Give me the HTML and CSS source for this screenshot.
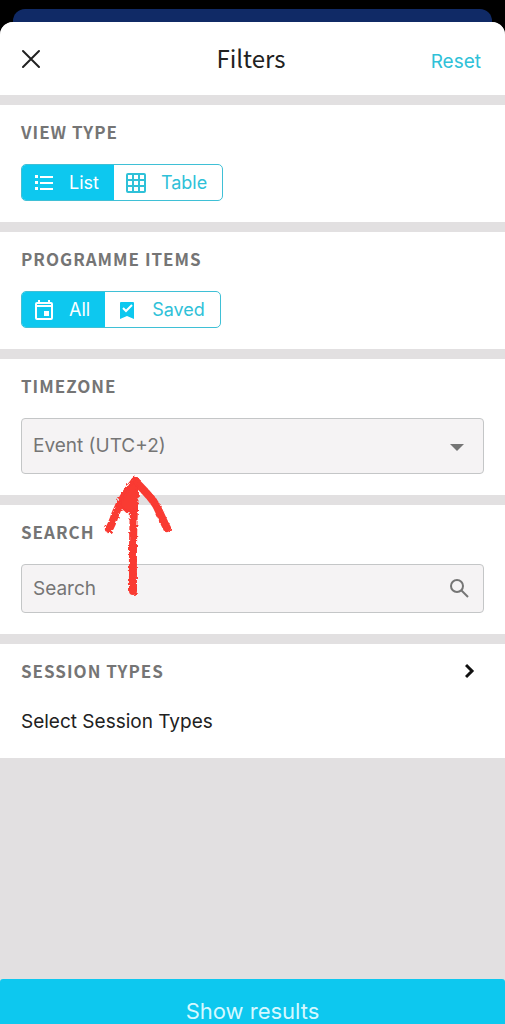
FILE: index.html
```html
<!DOCTYPE html>
<html lang="en">

<head>
    <meta charset="utf-8" />
    <meta name="viewport" content="width=device-width, initial-scale=1" />
    <title>Filters</title>
    <link rel="stylesheet" href="styles.css">
</head>

<body>
    <div class="behind"></div>

    <form class="sheet">
        <header class="header">
            <button class="close" type="button" aria-label="Close">
                <svg width="20" height="20" viewBox="0 0 20 20"><path d="M2 2l16 16M18 2L2 18" /></svg>
            </button>
            <h1>Filters</h1>
            <button class="reset" type="reset">Reset</button>
        </header>

        <fieldset class="section">
            <legend class="title">VIEW TYPE</legend>
            <div class="segments">
                <label class="segment">
                    <input type="radio" name="view" checked />
                    <svg width="20" height="20" viewBox="0 0 20 20">
                        <path d="M1 2h3v3H1zM1 8h3v3H1zM1 14h3v3H1zM6 3h13v2H6zM6 9h13v2H6zM6 15h13v2H6z" />
                    </svg>
                    <span>List</span>
                </label>
                <label class="segment">
                    <input type="radio" name="view" />
                    <svg width="20" height="20" viewBox="0 0 20 20">
                        <path fill-rule="evenodd" d="M2 0h16a2 2 0 0 1 2 2v16a2 2 0 0 1-2 2H2a2 2 0 0 1-2-2V2a2 2 0 0 1 2-2zM2 2v4h4V2zM8 2v4h4V2zM14 2v4h4V2zM2 8v4h4V8zM8 8v4h4V8zM14 8v4h4V8zM2 14v4h4v-4zM8 14v4h4v-4zM14 14v4h4v-4z" />
                    </svg>
                    <span>Table</span>
                </label>
            </div>
        </fieldset>

        <fieldset class="section">
            <legend class="title">PROGRAMME ITEMS</legend>
            <div class="segments">
                <label class="segment">
                    <input type="radio" name="items" checked />
                    <svg width="20" height="20" viewBox="0 0 20 20">
                        <path fill-rule="evenodd" d="M4 0h2v2h8V0h2v2h1a2 2 0 0 1 2 2v14a2 2 0 0 1-2 2H3a2 2 0 0 1-2-2V4a2 2 0 0 1 2-2h1zM3 4v1h14V4zM3 7v11h14V7zM10 11h5v5h-5z" />
                    </svg>
                    <span>All</span>
                </label>
                <label class="segment saved">
                    <input type="radio" name="items" />
                    <svg width="14" height="20" viewBox="0 0 14 20">
                        <path d="M1 2h12a1 1 0 0 1 1 1v16l-7-3-7 3V3a1 1 0 0 1 1-1z" />
                        <path class="tick" d="M3 8l3 3 6-6" />
                    </svg>
                    <span>Saved</span>
                </label>
            </div>
        </fieldset>

        <section class="section">
            <label class="title" for="timezone">TIMEZONE</label>
            <div class="field">
                <select class="timezone" id="timezone">
                    <option>Event (UTC+2)</option>
                </select>
                <svg width="20" height="20" viewBox="0 0 20 20"><path d="M1 8h14l-7 7z" /></svg>
            </div>
            <svg class="arrow" width="70" height="124" viewBox="0 0 70 124" aria-hidden="true">
                <filter id="crayon" x="-10%" y="-10%" width="120%" height="120%">
                    <feTurbulence type="fractalNoise" baseFrequency="0.4" numOctaves="2" seed="4" />
                    <feDisplacementMap in="SourceGraphic" scale="4" />
                </filter>
                <g filter="url(#crayon)">
                    <path d="M33 6C29 44 30 80 30 116" />
                    <path d="M32 6C22 18 15 32 12 40C10 46 8 51 6 54" />
                    <path d="M32 6C42 16 50 24 54 32C58 40 60 46 64 53" />
                    <path class="blob" d="M32 4L16 30L24 37L34 34L34 16z" />
                </g>
            </svg>
        </section>

        <section class="section">
            <label class="title" for="search">SEARCH</label>
            <div class="field">
                <input class="search" id="search" type="text" placeholder="Search" />
                <svg width="20" height="20" viewBox="0 0 20 20">
                    <circle cx="8" cy="7" r="6" />
                    <path class="handle" d="M12 11l7 7" />
                </svg>
            </div>
        </section>

        <section class="section">
            <a class="title more" href="#session-types">
                SESSION TYPES
                <svg width="10" height="16" viewBox="0 0 10 16"><path d="M1 2l6 6-6 6" /></svg>
            </a>
            <p class="types" id="session-types">Select Session Types</p>
        </section>

        <button class="show" type="submit">Show results</button>
    </form>
</body>

</html>
```

FILE: styles.css
```css
* {
    box-sizing: border-box;
}

body {
    display: flex;
    flex-direction: column;
    min-height: 100vh;
    margin: 0;
    padding-top: 9px;
    background: #000;
    color: #212121;
    font: 18px/24px Inter, sans-serif;
}

button, input, select {
    margin: 0;
    border: 0;
    font: inherit;
}

svg {
    flex: none;
    fill: currentColor;
}

.behind {
    height: 13px;
    margin: 0 13px;
    background: #102a66;
    border-radius: 12px 12px 0 0;
}

.sheet {
    display: flex;
    flex: 1;
    flex-direction: column;
    gap: 10px;
    overflow: hidden;
    background: #e2e0e1;
    border-radius: 13px 13px 0 0;
}

.header {
    display: grid;
    grid-template-columns: 1fr auto 1fr;
    align-items: center;
    height: 73px;
    padding: 0 24px 0 21px;
    background: #fff;
}

.header h1 {
    margin: 0;
    padding-bottom: 2px;
    font: 400 24px/32px "Noto Sans CJK SC", sans-serif;
}

.close {
    display: flex;
    justify-self: start;
    padding: 0;
    background: none;
    color: #212121;
}

.close path {
    stroke: currentColor;
    stroke-width: 2;
    stroke-linecap: round;
}

.reset {
    justify-self: end;
    padding: 6px 0 0;
    background: none;
    color: #2fc1d8;
    font-size: 19px;
}

.section {
    position: relative;
    min-width: 0;
    margin: 0;
    padding: 16px 21px 21px;
    border: 0;
    background: #fff;
}

.title {
    display: block;
    float: left;
    width: 100%;
    margin-bottom: 21px;
    padding: 0;
    color: #757575;
    font: bold 17px/22px "Noto Sans CJK SC", sans-serif;
    letter-spacing: 1px;
}

.segments, .field, .types {
    clear: both;
}

.segments {
    display: flex;
    width: fit-content;
    height: 37px;
    overflow: hidden;
    border: 1px solid #3fc0d6;
    border-radius: 5px;
}

.segment {
    display: flex;
    align-items: center;
    gap: 15px;
    padding: 0 15px 0 12px;
    color: #2fc1d8;
}

.segment input {
    position: absolute;
    opacity: 0;
}

.segment:has(:checked) {
    background: #0dc8ef;
    color: #fff;
}

.saved {
    gap: 18px;
    padding-left: 15px;
}

.saved svg {
    color: #0dc8ef;
}

.tick {
    fill: none;
    stroke: #fff;
    stroke-width: 2;
}

.field {
    display: grid;
    align-items: center;
}

.field > * {
    grid-area: 1 / 1;
}

.field select, .field input {
    width: 100%;
    padding: 0 11px;
    border: 1px solid #c4c6c7;
    border-radius: 4px;
    background: #f5f3f4;
    color: #757575;
    font-size: 19px;
    appearance: none;
}

.field svg {
    justify-self: end;
    margin-right: 15px;
    color: #757575;
    pointer-events: none;
}

.field .timezone {
    height: 56px;
}

.field .search {
    height: 49px;
}

.search::placeholder {
    color: #757575;
}

.search + svg circle, .handle {
    fill: none;
    stroke: currentColor;
    stroke-width: 2;
}

/* hand-drawn pointer to the timezone field */
.arrow {
    position: absolute;
    z-index: 1;
    top: 116px;
    left: 103px;
    overflow: visible;
    pointer-events: none;
}

.arrow path {
    fill: none;
    stroke: #f93a33;
    stroke-width: 8;
    stroke-linecap: round;
    stroke-linejoin: round;
}

.arrow .blob {
    fill: #f93a33;
    stroke-width: 2;
}

.more {
    display: flex;
    align-items: center;
    justify-content: space-between;
    padding-right: 9px;
    text-decoration: none;
}

.more svg {
    color: #111;
}

.more path {
    fill: none;
    stroke: currentColor;
    stroke-width: 3;
}

.types {
    margin: 0;
    padding: 7px 0 3px;
    font-size: 19px;
}

.show {
    height: 45px;
    margin-top: auto;
    padding: 19px 0 0;
    border-radius: 3px 3px 0 0;
    background: #0dc8ef;
    color: #d5f8ff;
    font-size: 22px;
    line-height: 24px;
}
```
